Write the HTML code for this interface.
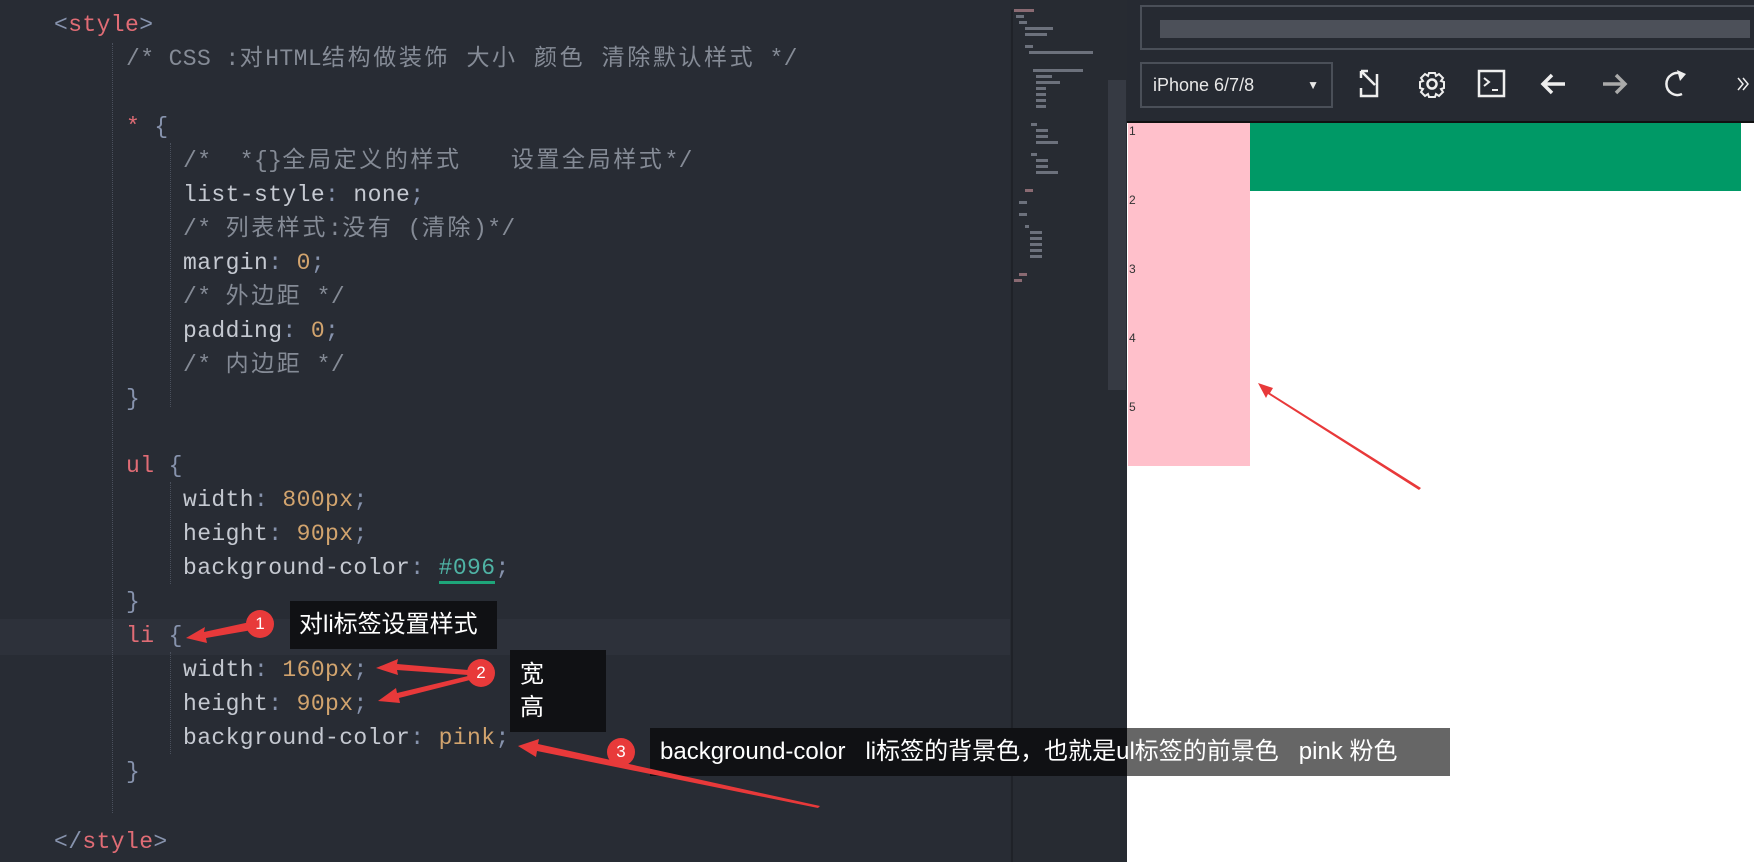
<!DOCTYPE html>
<html><head><meta charset="utf-8"><style>
*{margin:0;padding:0;box-sizing:border-box}
body{width:1754px;height:862px;overflow:hidden;background:#282c34;position:relative;font-family:"Liberation Mono","Noto Sans CJK SC",monospace}
.l{position:absolute;font-size:23px;line-height:34px;white-space:pre;color:#c5c9d1;letter-spacing:0.4px}
.z{letter-spacing:2.6px}
.c{color:#858b96}
.k{color:#e06c75}
.n{color:#d2a46e}
.b{color:#8793ad}
.g{position:absolute;border-left:1px dotted #4a505c}
.mm{position:absolute;height:3px;background:#6c717c}
.box{position:absolute;background:#101114;color:#fff;font-family:"Liberation Sans","Noto Sans CJK SC",sans-serif;font-size:24px}
.badge{position:absolute;width:28px;height:28px;border-radius:50%;background:#e83a3a;color:#fff;font-family:"Liberation Sans",sans-serif;font-size:17px;text-align:center;line-height:28px}
.num{position:absolute;left:1129px;font-family:"Liberation Sans",sans-serif;font-size:12px;color:#333}
</style></head><body>
<div style="position:absolute;left:0;top:619px;width:1010px;height:36px;background:#2d313a"></div>
<div class="g" style="left:112px;top:43px;height:770px"></div>
<div class="g" style="left:170px;top:143px;height:264px"></div>
<div class="g" style="left:170px;top:482px;height:102px"></div>
<div class="g" style="left:170px;top:652px;height:102px"></div>

<div class="l" style="left:54px;top:8px"><span class="b">&lt;</span><span class="k">style</span><span class="b">&gt;</span></div>
<div class="l c" style="left:126px;top:42px">/* CSS :<span class="z">对</span>HTML<span class="z">结构做装饰 大小 颜色 清除默认样式</span> */</div>
<div class="l" style="left:126px;top:110px"><span class="k">*</span> <span class="b">{</span></div>
<div class="l c" style="left:183px;top:144px">/*  *{}<span class="z">全局定义的样式   设置全局样式</span>*/</div>
<div class="l" style="left:183px;top:178px">list-style<span class="b">:</span> none<span class="b">;</span></div>
<div class="l c" style="left:183px;top:212px">/* <span class="z">列表样式</span>:<span class="z">没有</span> (<span class="z">清除</span>)*/</div>
<div class="l" style="left:183px;top:246px">margin<span class="b">:</span> <span class="n">0</span><span class="b">;</span></div>
<div class="l c" style="left:183px;top:280px">/* <span class="z">外边距</span> */</div>
<div class="l" style="left:183px;top:314px">padding<span class="b">:</span> <span class="n">0</span><span class="b">;</span></div>
<div class="l c" style="left:183px;top:348px">/* <span class="z">内边距</span> */</div>
<div class="l b" style="left:126px;top:382px">}</div>
<div class="l" style="left:126px;top:449px"><span class="k">ul</span> <span class="b">{</span></div>
<div class="l" style="left:183px;top:483px">width<span class="b">:</span> <span class="n">800px</span><span class="b">;</span></div>
<div class="l" style="left:183px;top:517px">height<span class="b">:</span> <span class="n">90px</span><span class="b">;</span></div>
<div class="l" style="left:183px;top:551px">background-color<span class="b">:</span> <span style="color:#4fb3a5;border-bottom:3px solid #1ea67a">#096</span><span class="b">;</span></div>
<div class="l b" style="left:126px;top:585px">}</div>
<div class="l" style="left:126px;top:619px"><span class="k">li</span> <span class="b">{</span></div>
<div class="l" style="left:183px;top:653px">width<span class="b">:</span> <span class="n">160px</span><span class="b">;</span></div>
<div class="l" style="left:183px;top:687px">height<span class="b">:</span> <span class="n">90px</span><span class="b">;</span></div>
<div class="l" style="left:183px;top:721px">background-color<span class="b">:</span> <span class="n">pink</span><span class="b">;</span></div>
<div class="l b" style="left:126px;top:755px">}</div>
<div class="l" style="left:54px;top:825px"><span class="b">&lt;/</span><span class="k">style</span><span class="b">&gt;</span></div>

<div style="position:absolute;left:1010px;top:0;width:117px;height:862px;background:#272b32"></div>
<div style="position:absolute;left:1011px;top:10px;width:2px;height:852px;background:#1f2228"></div>
<div style="position:absolute;left:1108px;top:80px;width:18px;height:310px;background:#363a43"></div>
<div class="mm" style="left:1014px;top:9px;width:20px;background:#8a6a72"></div>
<div class="mm" style="left:1016px;top:15px;width:8px"></div>
<div class="mm" style="left:1019px;top:21px;width:8px"></div>
<div class="mm" style="left:1025px;top:27px;width:28px"></div>
<div class="mm" style="left:1025px;top:33px;width:22px"></div>
<div class="mm" style="left:1025px;top:45px;width:8px"></div>
<div class="mm" style="left:1029px;top:51px;width:64px"></div>
<div class="mm" style="left:1033px;top:69px;width:50px"></div>
<div class="mm" style="left:1036px;top:75px;width:16px"></div>
<div class="mm" style="left:1036px;top:81px;width:24px"></div>
<div class="mm" style="left:1036px;top:87px;width:10px"></div>
<div class="mm" style="left:1036px;top:93px;width:10px"></div>
<div class="mm" style="left:1036px;top:99px;width:10px"></div>
<div class="mm" style="left:1036px;top:105px;width:10px"></div>
<div class="mm" style="left:1031px;top:123px;width:6px"></div>
<div class="mm" style="left:1036px;top:129px;width:12px"></div>
<div class="mm" style="left:1036px;top:135px;width:12px"></div>
<div class="mm" style="left:1036px;top:141px;width:22px"></div>
<div class="mm" style="left:1031px;top:153px;width:6px"></div>
<div class="mm" style="left:1036px;top:159px;width:12px"></div>
<div class="mm" style="left:1036px;top:165px;width:12px"></div>
<div class="mm" style="left:1036px;top:171px;width:22px"></div>
<div class="mm" style="left:1025px;top:189px;width:8px;background:#8a6a72"></div>
<div class="mm" style="left:1019px;top:201px;width:8px"></div>
<div class="mm" style="left:1019px;top:213px;width:8px"></div>
<div class="mm" style="left:1025px;top:225px;width:4px"></div>
<div class="mm" style="left:1030px;top:231px;width:12px"></div>
<div class="mm" style="left:1030px;top:237px;width:12px"></div>
<div class="mm" style="left:1030px;top:243px;width:12px"></div>
<div class="mm" style="left:1030px;top:249px;width:12px"></div>
<div class="mm" style="left:1030px;top:255px;width:12px"></div>
<div class="mm" style="left:1019px;top:273px;width:8px;background:#8a6a72"></div>
<div class="mm" style="left:1014px;top:279px;width:8px;background:#8a6a72"></div>

<div style="position:absolute;left:1127px;top:0;width:627px;height:123px;background:#262a32"></div>
<div style="position:absolute;left:1140px;top:5px;width:620px;height:45px;border:2px solid #4a4f58"></div>
<div style="position:absolute;left:1160px;top:20px;width:590px;height:18px;background:#4c5059"></div>
<div style="position:absolute;left:1140px;top:62px;width:193px;height:46px;border:2px solid #4a4f58;color:#e8e8e8;font-family:'Liberation Sans',sans-serif;font-size:18px;line-height:42px;padding-left:11px">iPhone 6/7/8<span style="position:absolute;right:12px;top:0;font-size:12px">▼</span></div>
<svg style="position:absolute;left:1355px;top:66px" width="400" height="36" fill="none" stroke="#eee" stroke-width="2.5">
 <path d="M6 5h7M6 5v7M6 5l14 14M22 8v22H6v-8"/>
 <g transform="translate(77,18)"><circle r="4.5"/><path d="M-3-11h6l1 3 3-2 4 4-2 3 3 1v6l-3 1 2 3-4 4-3-2-1 3h-6l-1-3-3 2-4-4 2-3-3-1v-6l3-1-2-3 4-4 3 2z" stroke-width="2"/></g>
 <rect x="124" y="5" width="25" height="25"/><path d="M129 12l5 4-5 4M137 24h6" stroke-width="2"/>
 <path d="M210 18h-22M197 9l-9 9 9 9" stroke-width="3.5"/>
 <path d="M248 18h22M261 9l9 9-9 9" stroke="#aaa" stroke-width="3.5"/>
 <path d="M327 8a11 11 0 1 0 0 20" stroke-width="2.5"/><path d="M322 4l9 4-6 7z" fill="#eee" stroke="none"/>
 <path d="M388 12l5 6-5 6M383 12l5 6-5 6" stroke-width="1.5"/>
</svg>
<div style="position:absolute;left:1127px;top:121px;width:627px;height:2px;background:#111"></div>
<div style="position:absolute;left:1127px;top:123px;width:627px;height:739px;background:#fff"></div>
<div style="position:absolute;left:1128px;top:123px;width:122px;height:343px;background:#ffc0cb"></div>
<div style="position:absolute;left:1250px;top:123px;width:491px;height:68px;background:#009966"></div>
<div class="num" style="top:124px">1</div>
<div class="num" style="top:193px">2</div>
<div class="num" style="top:262px">3</div>
<div class="num" style="top:331px">4</div>
<div class="num" style="top:400px">5</div>

<div class="box" style="left:290px;top:601px;width:207px;height:48px;line-height:48px;padding-left:9px;white-space:nowrap">对li标签设置样式</div>
<div class="box" style="left:510px;top:650px;width:96px;height:82px;padding:8px 10px;line-height:33px">宽<br>高</div>
<div class="box" style="left:650px;top:728px;width:477px;height:48px;line-height:48px;padding-left:10px;white-space:pre;overflow:hidden">background-color   li标签的背景色，也就是ul标签的前景色   pink 粉色</div>
<div class="box" style="left:1127px;top:728px;width:323px;height:48px;line-height:48px;background:#666;white-space:pre;overflow:hidden"><span style="position:relative;left:-477px;padding-left:10px">background-color   li标签的背景色，也就是ul标签的前景色   pink 粉色</span></div>
<svg style="position:absolute;left:0;top:0" width="1754" height="862" fill="#e8393a" stroke="none">
 <path d="M250 622L204 632L205 627L186 638L207 643L206 638L252 630Z"/>
 <path d="M468 670L397 664L398 659L376 668L398 675L397 670L468 675Z"/>
 <path d="M468 676L397 693L396 688L378 701L400 703L399 698L470 680Z"/>
 <path d="M820 806L538 744L539 739L518 746L536 757L537 751L818 808Z"/>
 <path d="M1421 488L1270 393L1273 388L1258 383L1266 398L1268 394L1419 490Z"/>
</svg>
<div class="badge" style="left:246px;top:610px">1</div>
<div class="badge" style="left:467px;top:659px">2</div>
<div class="badge" style="left:607px;top:738px">3</div>
</body></html>
